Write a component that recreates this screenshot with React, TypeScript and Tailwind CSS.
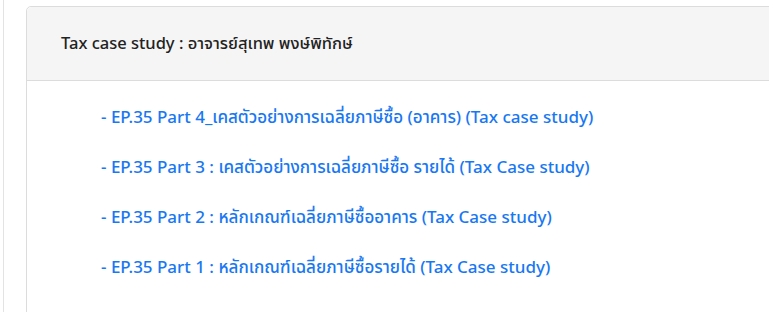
export default function App() {
  const links = [
    "- EP.35 Part 4_เคสตัวอย่างการเฉลี่ยภาษีซื้อ (อาคาร) (Tax case study)",
    "- EP.35 Part 3 : เคสตัวอย่างการเฉลี่ยภาษีซื้อ รายได้ (Tax Case study)",
    "- EP.35 Part 2 : หลักเกณฑ์เฉลี่ยภาษีซื้ออาคาร (Tax Case study)",
    "- EP.35 Part 1 : หลักเกณฑ์เฉลี่ยภาษีซื้อรายได้ (Tax Case study)",
  ];
  return (
    <div
      className="w-[769px] h-[312px] overflow-hidden bg-white"
      style={{ fontFamily: '"Noto Sans", "Noto Sans Thai", sans-serif' }}
    >
      <div className="ml-[3px] h-full border-l border-[#e3e3e3] pl-[22px] pt-[6px]">
        <div className="w-[800px] h-[320px] rounded-tl-[5px] border border-[#dcdcdc]">
          <div className="h-[74px] bg-[#f5f5f5] border-b border-[#dcdcdc] rounded-tl-[5px] flex items-center pl-[34px]">
            <span className="text-[16.5px] font-medium text-[#222]">
              Tax case study : อาจารย์สุเทพ พงษ์พิทักษ์
            </span>
          </div>
          <div className="flex flex-col pl-[74px] pt-[24px] gap-[26px]">
            {links.map((l) => (
              <a
                key={l}
                href="#"
                className="text-[17px] leading-[24px] font-medium text-[#1877f2] whitespace-nowrap"
              >
                {l}
              </a>
            ))}
          </div>
        </div>
      </div>
    </div>
  );
}
